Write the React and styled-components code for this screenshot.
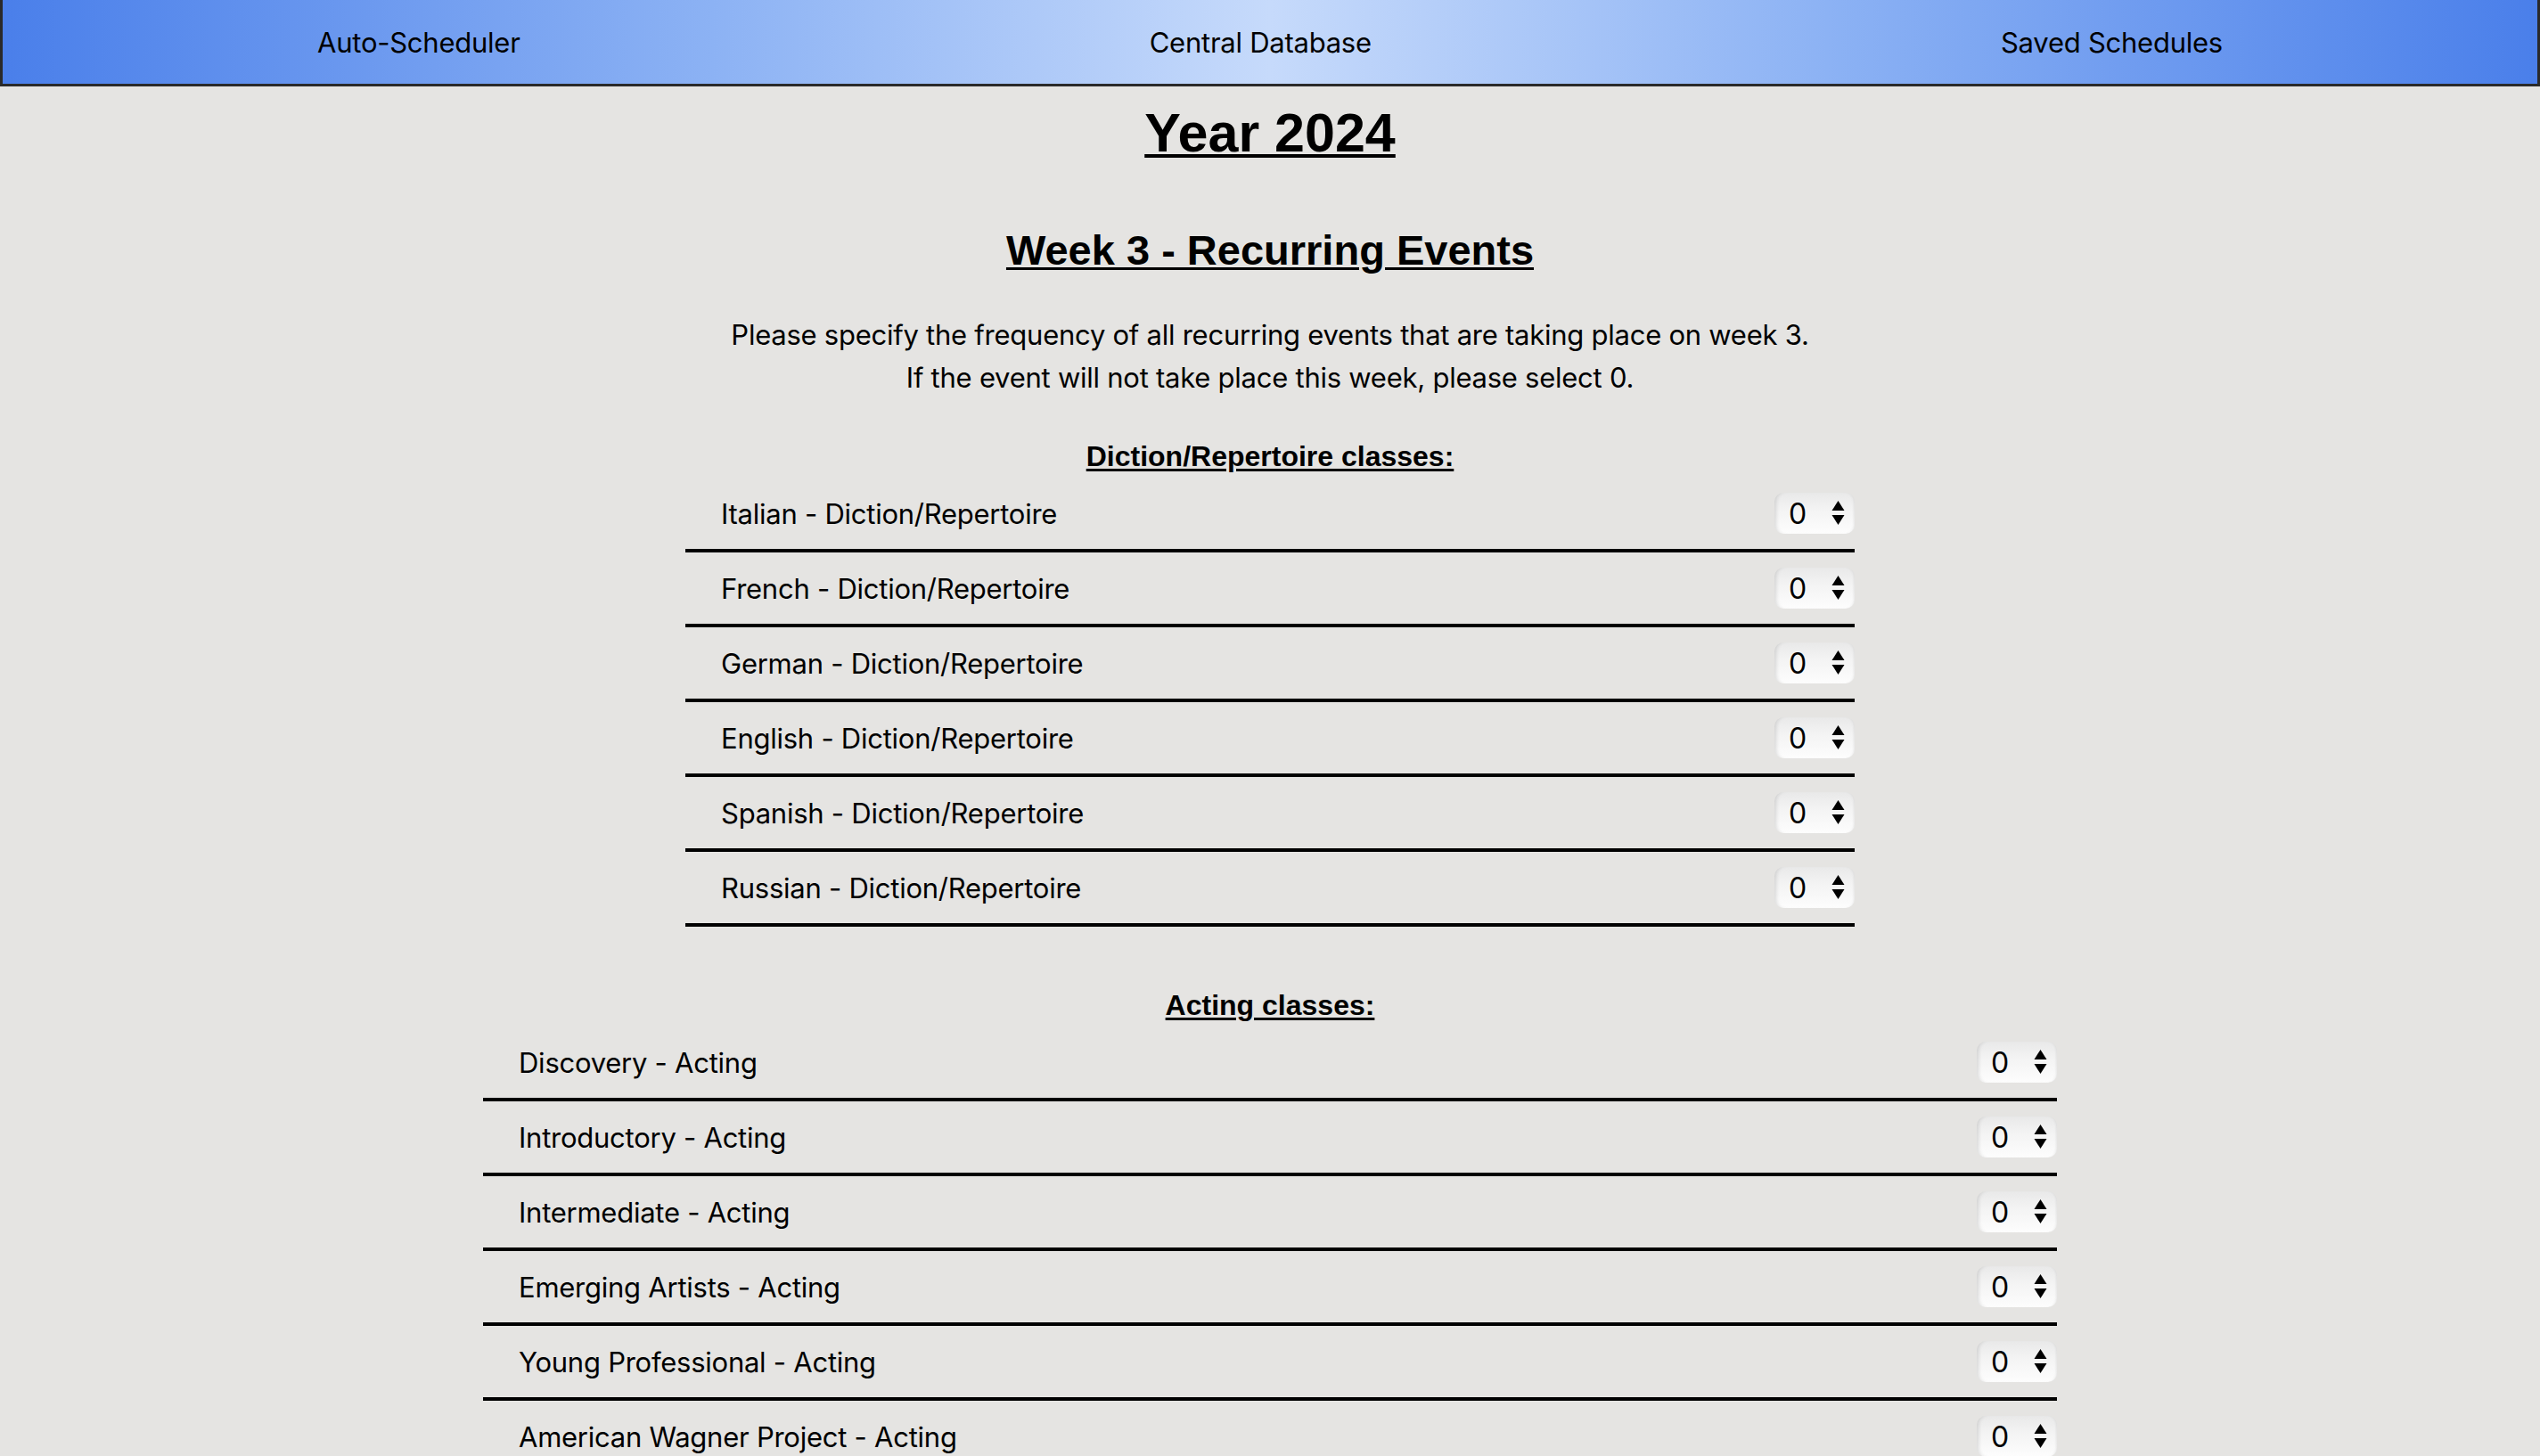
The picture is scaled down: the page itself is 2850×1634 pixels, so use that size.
import React from "react";
import styled, { createGlobalStyle } from "styled-components";

const GlobalStyle = createGlobalStyle`
  body {
    margin: 0;
    background: #e5e4e2;
    color: #000;
    font-family: Inter, "Liberation Sans", sans-serif;
  }
`;

const Nav = styled.nav`
  display: flex;
  align-items: center;
  justify-content: space-around;
  height: 94px;
  border: 3px solid #2a2a2a;
  border-top: none;
  background: linear-gradient(to right, #4a7fea 0%, #8cb2f4 28%, #c6dafb 50%, #8cb2f4 72%, #4a7fea 100%);
`;

const NavItem = styled.div`
  font-size: 31px;
  letter-spacing: -0.25px;
  color: #000;
`;

const Main = styled.main`
  display: flex;
  flex-direction: column;
  align-items: center;
  padding-bottom: 60px;
`;

const Title = styled.h1`
  margin: 22px 0 0;
  font-family: "Liberation Sans", Arial, sans-serif;
  font-size: 61px;
  line-height: 61px;
  font-weight: 700;
  text-decoration: underline;
  text-decoration-thickness: 4px;
  text-underline-offset: 3px;
`;

const Subtitle = styled.h2`
  margin: 77px 0 0;
  font-family: "Liberation Sans", Arial, sans-serif;
  font-size: 47px;
  line-height: 47px;
  font-weight: 700;
  text-decoration: underline;
  text-decoration-thickness: 3px;
  text-underline-offset: 3px;
`;

const Intro = styled.p`
  margin: 48px 0 0;
  font-size: 31px;
  letter-spacing: -0.25px;
  line-height: 48px;
  text-align: center;
`;

const Section = styled.section`
  width: ${(p) => p.$width}px;
  margin-top: 41px;

  & + & {
    margin-top: 65px;
  }
`;

const SectionTitle = styled.h3`
  margin: 0;
  font-family: "Liberation Sans", Arial, sans-serif;
  font-size: 32px;
  line-height: 47px;
  font-weight: 700;
  text-align: center;
  text-decoration: underline;
  text-decoration-thickness: 3px;
  text-underline-offset: 3px;
`;

const Row = styled.div`
  display: flex;
  align-items: center;
  justify-content: space-between;
  height: 80px;
  padding-left: 40px;
  border-bottom: 4px solid #000;
  font-size: 31px;
  letter-spacing: -0.25px;
`;

const Stepper = styled.div`
  box-sizing: border-box;
  width: 90px;
  height: 46px;
  display: flex;
  align-items: center;
  justify-content: space-between;
  padding: 0 11px 0 16px;
  border-radius: 10px;
  background: linear-gradient(to bottom, #e9e9e9 0%, #f4f4f4 45%, #fdfdfd 100%);
  box-shadow: inset 5px 0 4px -3px rgba(0, 0, 0, 0.13), inset -3px 0 3px -2px rgba(0, 0, 0, 0.08);
  font-size: 32px;
  letter-spacing: 0;
`;

const Arrows = () => (
  <svg width="15" height="30" viewBox="0 0 15 30">
    <polygon points="7.5,1 14.5,12 0.5,12" fill="#000" />
    <polygon points="0.5,17 14.5,17 7.5,28" fill="#000" />
  </svg>
);

const diction = ["Italian", "French", "German", "English", "Spanish", "Russian"];
const acting = [
  "Discovery",
  "Introductory",
  "Intermediate",
  "Emerging Artists",
  "Young Professional",
  "American Wagner Project",
];

const sections = [
  { title: "Diction/Repertoire classes:", width: 1312, items: diction.map((d) => `${d} - Diction/Repertoire`) },
  { title: "Acting classes:", width: 1766, items: acting.map((a) => `${a} - Acting`) },
];

const App = () => {
  return (
    <>
      <GlobalStyle />
      <Nav>
        <NavItem>Auto-Scheduler</NavItem>
        <NavItem>Central Database</NavItem>
        <NavItem>Saved Schedules</NavItem>
      </Nav>
      <Main>
        <Title>Year 2024</Title>
        <Subtitle>Week 3 - Recurring Events</Subtitle>
        <Intro>
          Please specify the frequency of all recurring events that are taking place on week 3.
          <br />
          If the event will not take place this week, please select 0.
        </Intro>
        {sections.map((s) => (
          <Section key={s.title} $width={s.width}>
            <SectionTitle>{s.title}</SectionTitle>
            {s.items.map((item) => (
              <Row key={item}>
                <span>{item}</span>
                <Stepper>
                  <span>0</span>
                  <Arrows />
                </Stepper>
              </Row>
            ))}
          </Section>
        ))}
      </Main>
    </>
  );
};

export default App;
